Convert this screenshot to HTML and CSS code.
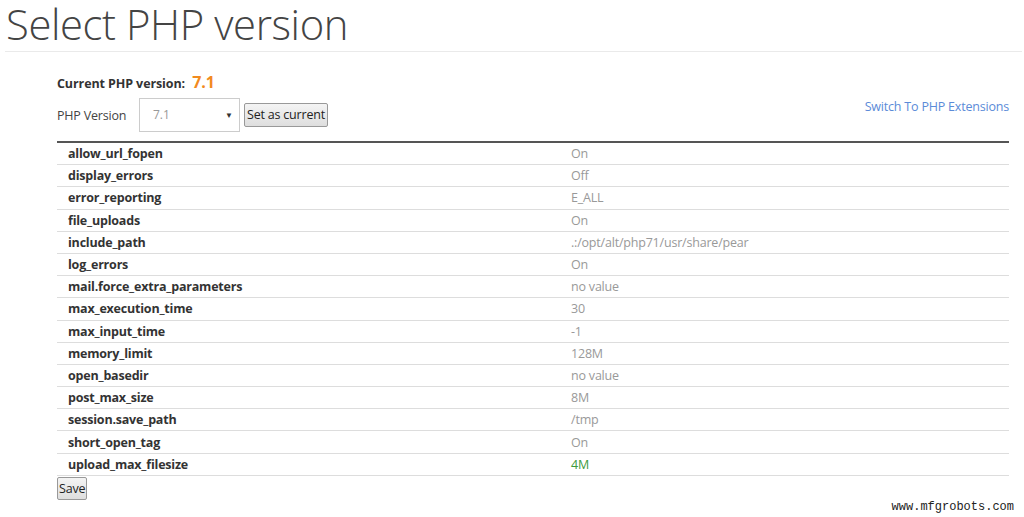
FILE: index.html
```html
<!DOCTYPE html>
<html>
<head>
<meta charset="utf-8">
<link rel="stylesheet" href="styles.css">
</head>
<body>
<div class="page">
  <h1 class="title">Select PHP version</h1>
  <div class="content">
    <div class="current">Current PHP version: <span class="cur-ver">7.1</span></div>
    <div class="controls">
      <div class="left-controls">
        <span class="label">PHP Version</span>
        <div class="select"><span>7.1</span><span class="arrow">▼</span></div>
        <button class="btn">Set as current</button>
      </div>
      <a class="link">Switch To PHP Extensions</a>
    </div>
    <table class="opts">
      <tr><td class="n">allow_url_fopen</td><td class="v">On</td></tr>
      <tr><td class="n">display_errors</td><td class="v">Off</td></tr>
      <tr><td class="n">error_reporting</td><td class="v">E_ALL</td></tr>
      <tr><td class="n">file_uploads</td><td class="v">On</td></tr>
      <tr><td class="n">include_path</td><td class="v">.:/opt/alt/php71/usr/share/pear</td></tr>
      <tr><td class="n">log_errors</td><td class="v">On</td></tr>
      <tr><td class="n">mail.force_extra_parameters</td><td class="v">no value</td></tr>
      <tr><td class="n">max_execution_time</td><td class="v">30</td></tr>
      <tr><td class="n">max_input_time</td><td class="v">-1</td></tr>
      <tr><td class="n">memory_limit</td><td class="v">128M</td></tr>
      <tr><td class="n">open_basedir</td><td class="v">no value</td></tr>
      <tr><td class="n">post_max_size</td><td class="v">8M</td></tr>
      <tr><td class="n">session.save_path</td><td class="v">/tmp</td></tr>
      <tr><td class="n">short_open_tag</td><td class="v">On</td></tr>
      <tr><td class="n">upload_max_filesize</td><td class="v green">4M</td></tr>
    </table>
    <button class="btn save">Save</button>
  </div>
  <div class="wm">www.mfgrobots.com</div>
</div>
</body>
</html>
```

FILE: styles.css
```css
html, body { margin: 0; padding: 0; background: #fff; }
body { font-family: "Open Sans", "Noto Sans", sans-serif; color: #333; width: 1024px; height: 517px; overflow: hidden; }
.page { position: relative; height: 517px; }
.title {
  margin: 0 2px 0 5px;
  padding: 0 0 3px 1px;
  font-weight: 300;
  font-size: 41.8px;
  line-height: 48px;
  color: #444;
  border-bottom: 1px solid #eaeaea;
  letter-spacing: -0.4px;
}
.content { margin: 0 15px 0 57px; }
.current { font-weight: 700; font-size: 12.5px; margin-top: 19px; height: 22px; line-height: 22px; color: #333; letter-spacing: -0.1px; }
.cur-ver { color: #f28a1e; font-size: 16px; margin-left: 4px; }
.controls { display: flex; justify-content: space-between; align-items: center; margin-top: 4px; height: 35px; }
.left-controls { display: flex; align-items: center; }
.label { font-size: 12.5px; color: #444; width: 82px; margin-top: 2px; letter-spacing: -0.2px; }
.select {
  box-sizing: border-box; width: 101px; height: 34px; border: 1px solid #ccc; background: #fff;
  display: flex; align-items: center; justify-content: space-between; padding: 0 6px 0 13px;
  font-size: 12px; color: #999;
}
.arrow { font-size: 8px; color: #333; }
.btn {
  font-family: "Open Sans", sans-serif; font-size: 12.5px; color: #222;
  background: linear-gradient(#f4f4f4, #dedede); border: 1px solid #999; border-radius: 2px;
  padding: 0 2px; height: 24px; margin-left: 4px; letter-spacing: -0.2px;
}
.link { color: #5b8bd8; font-size: 12.5px; margin-right: 0; margin-top: -16px; letter-spacing: -0.2px; }
.opts { width: 952px; border-collapse: collapse; border-top: 2px solid #555; margin-top: 9px; }
.opts td { height: 21.2px; padding: 0 11px; border-bottom: 1px solid #ddd; font-size: 12.5px; line-height: 21px; letter-spacing: -0.2px; }
.opts td.n { font-weight: 700; width: 489px; color: #333; }
.opts td.v { color: #999; padding-left: 3px; }
.opts td.v.green { color: #3d9a3d; }
.save { margin: 1px 0 0 0; height: 23px; padding: 0 1px; }
.wm { position: absolute; right: 10px; bottom: 3px; font-family: "Liberation Mono", "DejaVu Sans Mono", monospace; font-size: 12px; color: #222; }
```
